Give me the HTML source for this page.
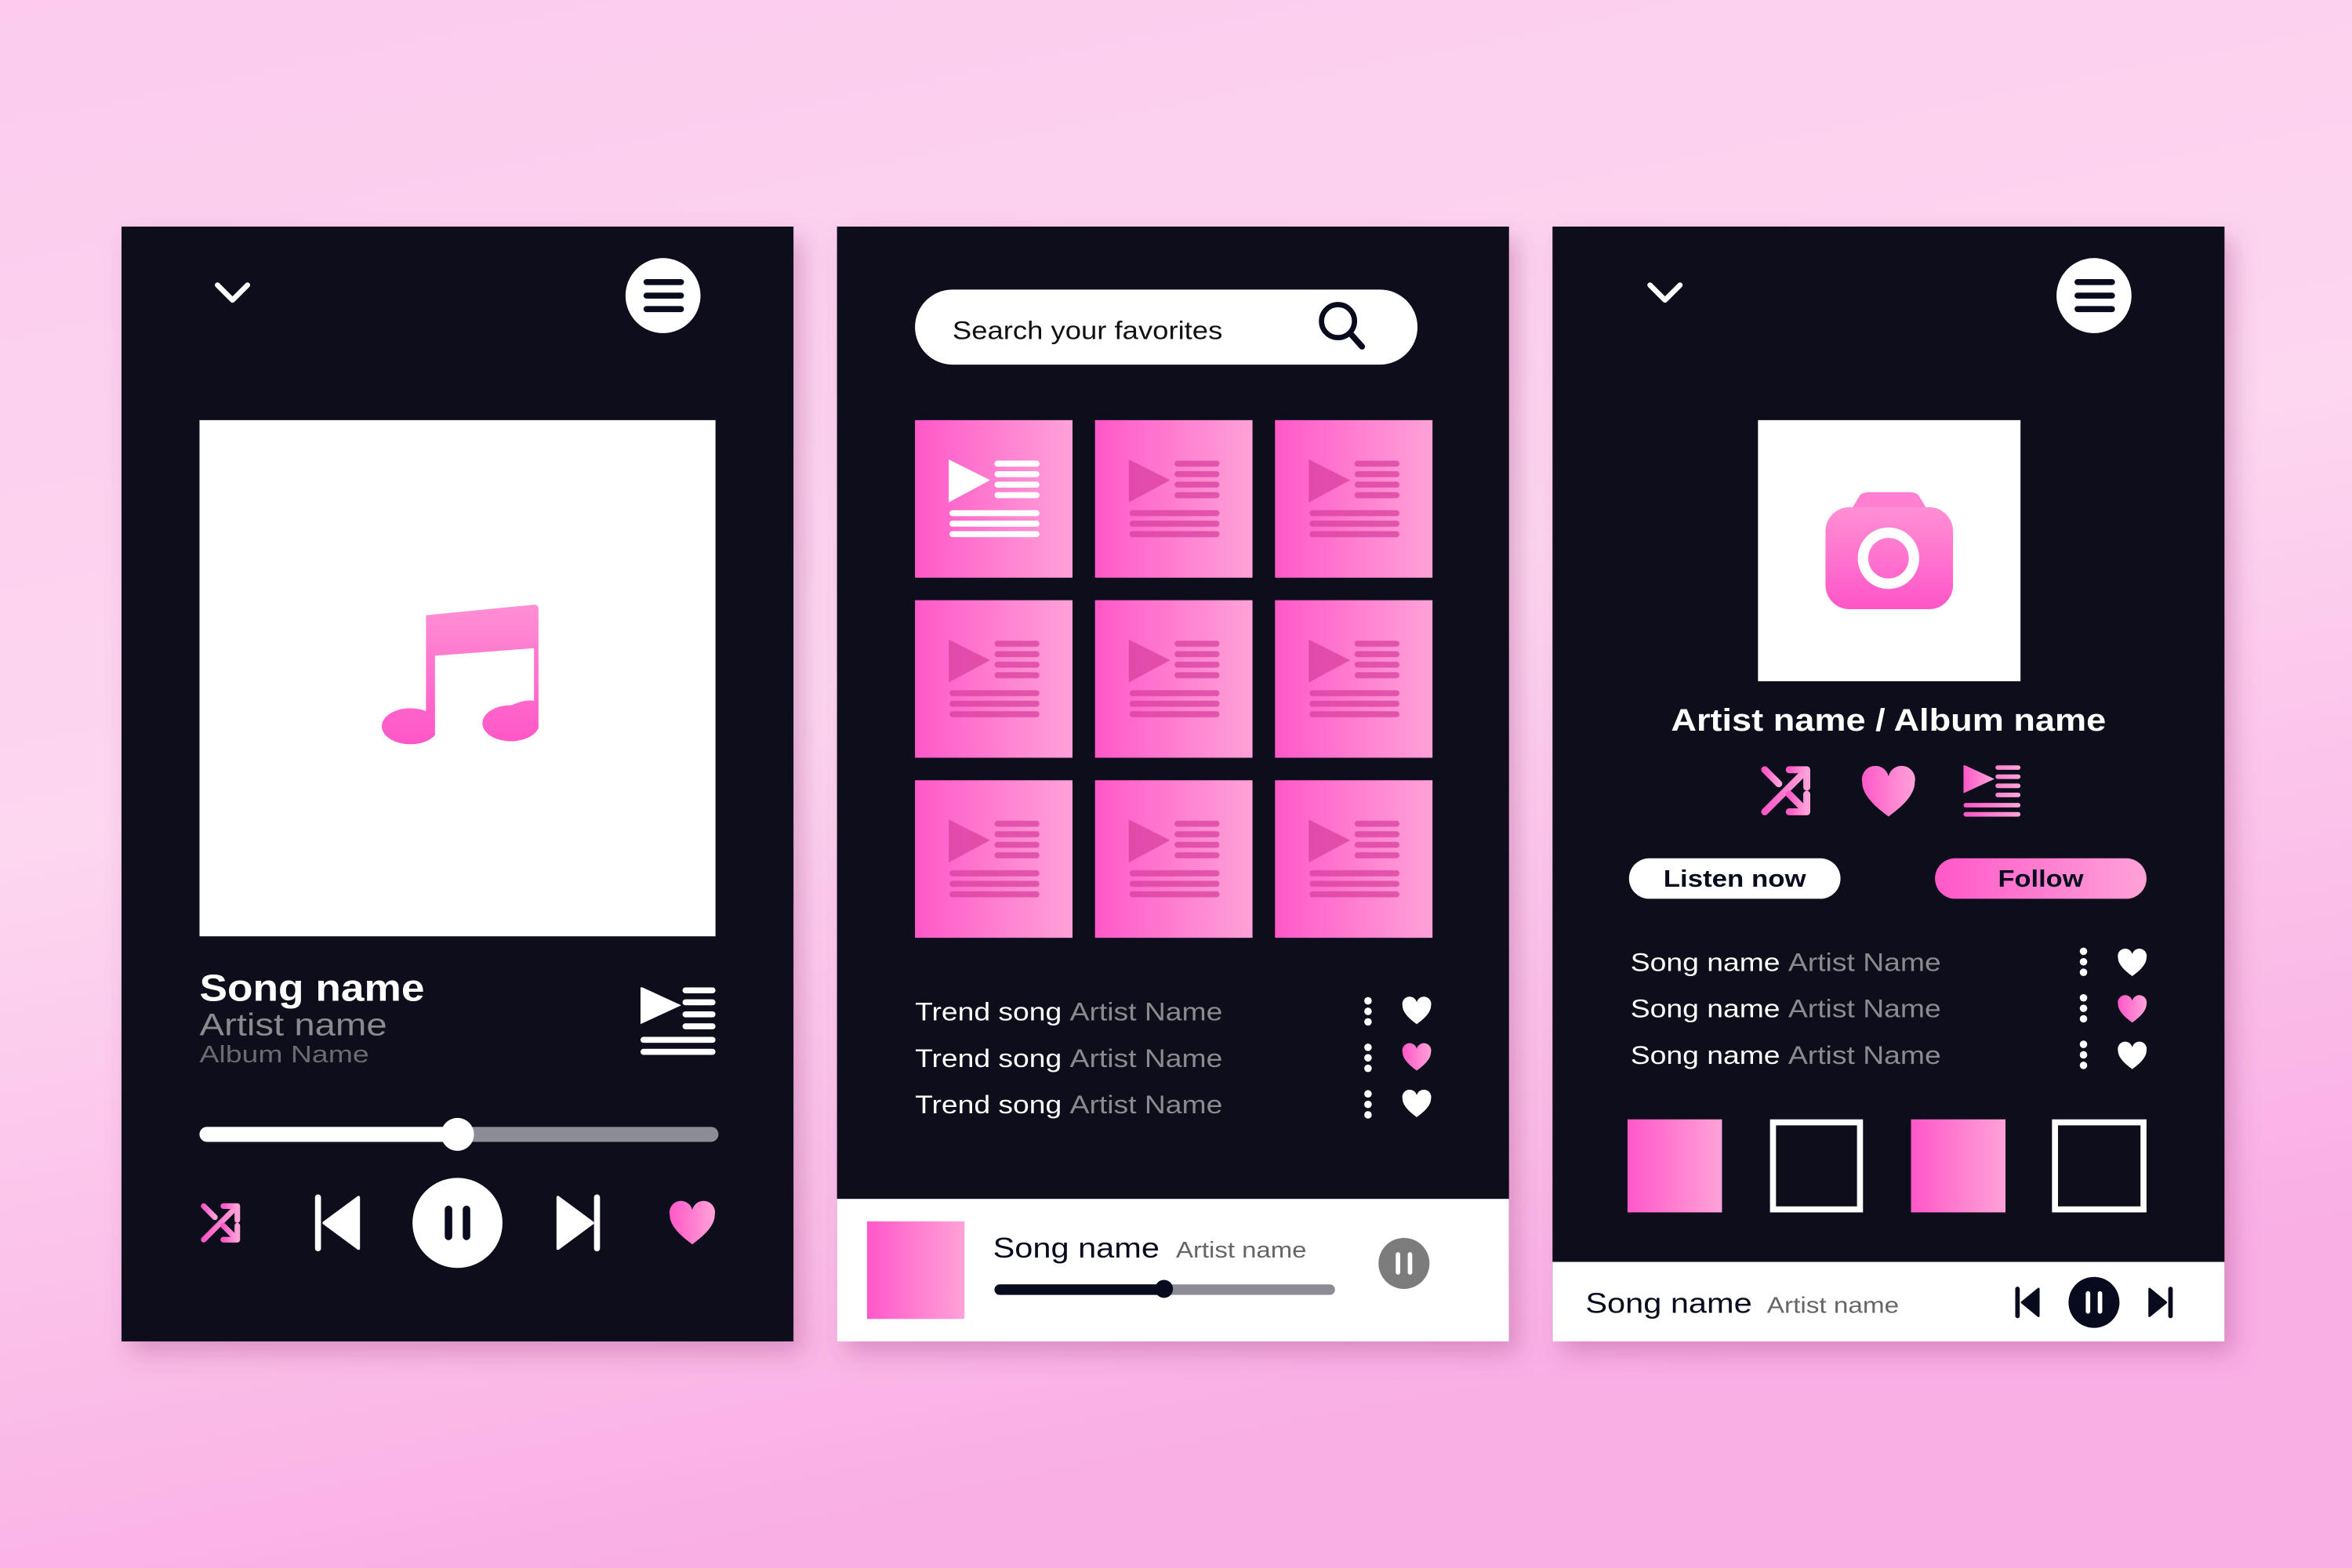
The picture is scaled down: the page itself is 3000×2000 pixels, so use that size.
<!DOCTYPE html>
<html><head><meta charset="utf-8"><style>
html,body{margin:0;padding:0;width:3000px;height:2000px;overflow:hidden}
svg{display:block}
text{font-family:"Liberation Sans",sans-serif}
</style></head><body>
<svg width="3000" height="2000" viewBox="0 0 1568 1045" preserveAspectRatio="none" xmlns="http://www.w3.org/2000/svg">
<defs>
<linearGradient id="bg" x1="0" y1="0" x2="0.3" y2="1">
<stop offset="0" stop-color="#fccbee"/><stop offset="0.5" stop-color="#fdd6f0"/><stop offset="1" stop-color="#f9aee4"/></linearGradient>
<linearGradient id="pk" x1="0" y1="0" x2="1" y2="0"><stop offset="0" stop-color="#ff58c8"/><stop offset="1" stop-color="#ffa2d8"/></linearGradient>
<linearGradient id="pkv" x1="0" y1="0" x2="0" y2="1"><stop offset="0" stop-color="#ff90d4"/><stop offset="1" stop-color="#ff55c8"/></linearGradient>
<filter id="sh" x="-10%" y="-10%" width="120%" height="120%"><feDropShadow dx="6" dy="8" stdDeviation="8" flood-color="#a04080" flood-opacity="0.35"/></filter>
<symbol id="heart" viewBox="0 0 24 22"><path d="M12 21.5C10 19.8 1 14 1 7.2A5.6 5.6 0 0 1 12 4.6A5.6 5.6 0 0 1 23 7.2C23 14 14 19.8 12 21.5Z"/></symbol>
<symbol id="tile" viewBox="0 0 105 105">
<path d="M23 27L49 40L23 54Z"/>
<g stroke-width="4" stroke-linecap="round"><path d="M55 29H81M55 36H81M55 43H81M55 50H81M25 62H81M25 69H81M25 76H81"/></g>
</symbol>
<symbol id="plist" viewBox="0 0 50 46"><path d="M0 0L26 12L0 24Z"/><g stroke-width="4" stroke-linecap="round" fill="none"><path d="M30 2H48M30 10H48M30 18H48M30 26H48M2 35H48M2 43H48"/></g></symbol>
<symbol id="shuf" viewBox="0 0 30 30"><g stroke-width="4" stroke-linecap="round" stroke-linejoin="round" fill="none"><path d="M3 27L26 4"/><path d="M3 3L11 11"/><path d="M17 17L26 26"/><path d="M17 3H27V13"/><path d="M27 17V27H17"/></g></symbol>
<symbol id="dots" viewBox="0 0 6 20"><circle cx="3" cy="3" r="2.5"/><circle cx="3" cy="10" r="2.5"/><circle cx="3" cy="17" r="2.5"/></symbol>
</defs>
<rect width="1568" height="1045" fill="url(#bg)"/>

<!-- PANEL 1 -->
<g filter="url(#sh)"><rect x="81" y="151" width="448" height="743" fill="#080b1e"/></g>
<path d="M145 190L155 200L165 190" stroke="#fff" stroke-width="3.5" fill="none" stroke-linecap="round" stroke-linejoin="round"/>
<circle cx="442" cy="197" r="25" fill="#fff"/>
<g stroke="#080b1e" stroke-width="4" stroke-linecap="round"><path d="M431 188H454M431 197H454M431 206H454"/></g>
<rect x="133" y="280" width="344" height="344" fill="#fff"/>
<path d="M284 410L356 403Q359 403 359 406V485A19 12 0 1 1 341 470Q350 466 356 467V432L290 437V490A19 12 0 1 1 284 474Z" fill="url(#pkv)"/>
<text x="133" y="667" font-size="25" font-weight="bold" fill="#fff" textLength="150" lengthAdjust="spacingAndGlyphs">Song name</text>
<text x="133" y="690" font-size="21" fill="#8a8a8f" textLength="125" lengthAdjust="spacingAndGlyphs">Artist name</text>
<text x="133" y="708" font-size="16" fill="#6a6a70" textLength="113" lengthAdjust="spacingAndGlyphs">Album Name</text>
<use href="#plist" x="427" y="658" width="50" height="46" fill="#fff" stroke="#fff"/>
<rect x="133" y="751" width="346" height="10" rx="5" fill="#8c8c96"/>
<rect x="133" y="751" width="172" height="10" rx="5" fill="#fff"/>
<circle cx="305" cy="756" r="11" fill="#fff"/>
<use href="#shuf" x="133" y="801" width="28" height="28" stroke="url(#pk)"/>
<g fill="#fff" stroke="#fff"><path d="M212 798V832" stroke-width="4" stroke-linecap="round"/><path d="M239 798V832L216 815Z" stroke-linejoin="round" stroke-width="2"/></g>
<circle cx="305" cy="815" r="30" fill="#fff"/>
<g stroke="#080b1e" stroke-width="5" stroke-linecap="round"><path d="M299 806V824M311 806V824"/></g>
<g fill="#fff" stroke="#fff"><path d="M398 798V832" stroke-width="4" stroke-linecap="round"/><path d="M372 798V832L395 815Z" stroke-linejoin="round" stroke-width="2"/></g>
<use href="#heart" x="445" y="800" width="33" height="30" fill="url(#pk)"/>

<!-- PANEL 2 -->
<g filter="url(#sh)"><rect x="558" y="151" width="448" height="743" fill="#080b1e"/></g>
<rect x="610" y="193" width="335" height="50" rx="25" fill="#fff"/>
<text x="635" y="226" font-size="17" fill="#111" textLength="180" lengthAdjust="spacingAndGlyphs">Search your favorites</text>
<circle cx="892" cy="214" r="11" stroke="#080b1e" stroke-width="3.5" fill="none"/>
<path d="M900 222L908 231" stroke="#080b1e" stroke-width="4" stroke-linecap="round"/>
<g>
<rect x="610" y="280" width="105" height="105" fill="url(#pk)"/>
<rect x="730" y="280" width="105" height="105" fill="url(#pk)"/>
<rect x="850" y="280" width="105" height="105" fill="url(#pk)"/>
<rect x="610" y="400" width="105" height="105" fill="url(#pk)"/>
<rect x="730" y="400" width="105" height="105" fill="url(#pk)"/>
<rect x="850" y="400" width="105" height="105" fill="url(#pk)"/>
<rect x="610" y="520" width="105" height="105" fill="url(#pk)"/>
<rect x="730" y="520" width="105" height="105" fill="url(#pk)"/>
<rect x="850" y="520" width="105" height="105" fill="url(#pk)"/>
</g>
<use href="#tile" x="610" y="280" width="105" height="105" fill="#fff" stroke="#fff"/>
<g fill="#d8409e" stroke="#d8409e" opacity="0.75">
<use href="#tile" x="730" y="280" width="105" height="105"/>
<use href="#tile" x="850" y="280" width="105" height="105"/>
<use href="#tile" x="610" y="400" width="105" height="105"/>
<use href="#tile" x="730" y="400" width="105" height="105"/>
<use href="#tile" x="850" y="400" width="105" height="105"/>
<use href="#tile" x="610" y="520" width="105" height="105"/>
<use href="#tile" x="730" y="520" width="105" height="105"/>
<use href="#tile" x="850" y="520" width="105" height="105"/>
</g>
<g font-size="17">
<text x="610" y="680" fill="#fff" textLength="205" lengthAdjust="spacingAndGlyphs">Trend song <tspan fill="#8a8a8f">Artist Name</tspan></text>
<text x="610" y="711" fill="#fff" textLength="205" lengthAdjust="spacingAndGlyphs">Trend song <tspan fill="#8a8a8f">Artist Name</tspan></text>
<text x="610" y="742" fill="#fff" textLength="205" lengthAdjust="spacingAndGlyphs">Trend song <tspan fill="#8a8a8f">Artist Name</tspan></text>
</g>
<g fill="#fff"><use href="#dots" x="909" y="664" width="6" height="20"/><use href="#dots" x="909" y="695" width="6" height="20"/><use href="#dots" x="909" y="726" width="6" height="20"/></g>
<use href="#heart" x="934" y="664" width="21" height="19" fill="#fff"/>
<use href="#heart" x="934" y="695" width="21" height="19" fill="url(#pk)"/>
<use href="#heart" x="934" y="726" width="21" height="19" fill="#fff"/>
<rect x="558" y="799" width="448" height="95" fill="#fff"/>
<rect x="578" y="814" width="65" height="65" fill="url(#pk)"/>
<text x="662" y="838" font-size="19" fill="#080b1e" textLength="111" lengthAdjust="spacingAndGlyphs">Song name</text>
<text x="784" y="838" font-size="15" fill="#666" textLength="87" lengthAdjust="spacingAndGlyphs">Artist name</text>
<rect x="663" y="856" width="227" height="7" rx="3.5" fill="#8c8c96"/>
<rect x="663" y="856" width="113" height="7" rx="3.5" fill="#080b1e"/>
<circle cx="776" cy="859" r="6" fill="#080b1e"/>
<circle cx="936" cy="842" r="17" fill="#7c7c7c"/>
<g stroke="#fff" stroke-width="3" stroke-linecap="round"><path d="M932 836V848M940 836V848"/></g>

<!-- PANEL 3 -->
<g filter="url(#sh)"><rect x="1035" y="151" width="448" height="743" fill="#080b1e"/></g>
<path d="M1100 190L1110 200L1120 190" stroke="#fff" stroke-width="3.5" fill="none" stroke-linecap="round" stroke-linejoin="round"/>
<circle cx="1396" cy="197" r="25" fill="#fff"/>
<g stroke="#080b1e" stroke-width="4" stroke-linecap="round"><path d="M1385 188H1408M1385 197H1408M1385 206H1408"/></g>
<rect x="1172" y="280" width="175" height="174" fill="#fff"/>
<path d="M1234 340L1240 330Q1242 328 1246 328H1273Q1277 328 1279 330L1285 340Z" fill="#ff80d0"/>
<rect x="1217" y="338" width="85" height="68" rx="16" fill="url(#pkv)"/>
<circle cx="1259" cy="372" r="17" fill="none" stroke="#fff" stroke-width="7"/>
<text x="1114" y="487" font-size="21" font-weight="bold" fill="#fff" textLength="290" lengthAdjust="spacingAndGlyphs">Artist name / Album name</text>
<use href="#shuf" x="1173" y="509" width="35" height="36" stroke="url(#pk)"/>
<use href="#heart" x="1239" y="510" width="40" height="35" fill="url(#pk)"/>
<g fill="url(#pk)" stroke="url(#pk)"><use href="#plist" x="1309" y="510" width="38" height="35"/></g>
<rect x="1086" y="572" width="141" height="27" rx="13.5" fill="#fff"/>
<text x="1109" y="591" font-size="16" font-weight="bold" fill="#080b1e" textLength="95" lengthAdjust="spacingAndGlyphs">Listen now</text>
<rect x="1290" y="572" width="141" height="27" rx="13.5" fill="url(#pk)"/>
<text x="1332" y="591" font-size="16" font-weight="bold" fill="#080b1e" textLength="57" lengthAdjust="spacingAndGlyphs">Follow</text>
<g font-size="17">
<text x="1087" y="647" fill="#fff" textLength="207" lengthAdjust="spacingAndGlyphs">Song name <tspan fill="#8a8a8f">Artist Name</tspan></text>
<text x="1087" y="678" fill="#fff" textLength="207" lengthAdjust="spacingAndGlyphs">Song name <tspan fill="#8a8a8f">Artist Name</tspan></text>
<text x="1087" y="709" fill="#fff" textLength="207" lengthAdjust="spacingAndGlyphs">Song name <tspan fill="#8a8a8f">Artist Name</tspan></text>
</g>
<g fill="#fff"><use href="#dots" x="1386" y="631" width="6" height="20"/><use href="#dots" x="1386" y="662" width="6" height="20"/><use href="#dots" x="1386" y="693" width="6" height="20"/></g>
<use href="#heart" x="1411" y="632" width="21" height="19" fill="#fff"/>
<use href="#heart" x="1411" y="663" width="21" height="19" fill="url(#pk)"/>
<use href="#heart" x="1411" y="694" width="21" height="19" fill="#fff"/>
<rect x="1085" y="746" width="63" height="62" fill="url(#pk)"/>
<rect x="1182" y="748" width="58" height="58" fill="none" stroke="#fff" stroke-width="4"/>
<rect x="1274" y="746" width="63" height="62" fill="url(#pk)"/>
<rect x="1370" y="748" width="59" height="58" fill="none" stroke="#fff" stroke-width="4"/>
<rect x="1035" y="841" width="448" height="53" fill="#fff"/>
<text x="1057" y="875" font-size="19" fill="#080b1e" textLength="111" lengthAdjust="spacingAndGlyphs">Song name</text>
<text x="1178" y="875" font-size="15" fill="#666" textLength="88" lengthAdjust="spacingAndGlyphs">Artist name</text>
<g fill="#080b1e" stroke="#080b1e"><path d="M1345 859V877" stroke-width="3" stroke-linecap="round"/><path d="M1359 859V877L1348 868Z" stroke-width="1.5" stroke-linejoin="round"/></g>
<circle cx="1396" cy="868" r="17" fill="#080b1e"/>
<g stroke="#fff" stroke-width="3" stroke-linecap="round"><path d="M1392 862V874M1400 862V874"/></g>
<g fill="#080b1e" stroke="#080b1e"><path d="M1447 859V877" stroke-width="3" stroke-linecap="round"/><path d="M1433 859V877L1444 868Z" stroke-width="1.5" stroke-linejoin="round"/></g>
</svg>
</body></html>
